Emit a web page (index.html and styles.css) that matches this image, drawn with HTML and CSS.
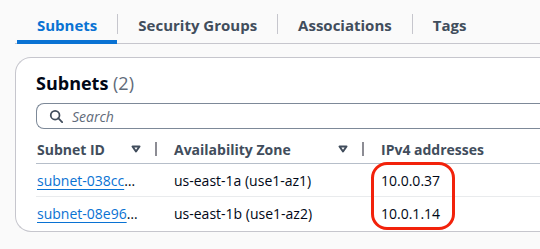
FILE: index.html
```html
<!DOCTYPE html>
<html lang="en">

<head>
    <meta charset="UTF-8">
    <meta name="viewport" content="width=device-width, initial-scale=1.0">
    <title>Subnets</title>
    <link rel="stylesheet" href="styles.css">
</head>

<body>
    <div class="tabs">
        <div class="tab active">Subnets</div>
        <span class="tab-sep"></span>
        <div class="tab">Security Groups</div>
        <span class="tab-sep"></span>
        <div class="tab">Associations</div>
        <span class="tab-sep"></span>
        <div class="tab">Tags</div>
    </div>

    <div class="card">
        <h2 class="card-title">Subnets <span class="count">(2)</span></h2>
        <div class="search">
            <svg class="search-icon" width="14" height="14" viewBox="0 0 16 16">
                <circle cx="7" cy="7" r="5" fill="none" stroke="#414d5c" stroke-width="2" />
                <path d="M10.5 10.5 L15 15" stroke="#414d5c" stroke-width="2" stroke-linecap="round" />
            </svg>
            <span class="placeholder">Search</span>
        </div>

        <div class="table">
            <div class="th">
                <span>Subnet ID</span>
                <svg class="sort" width="10" height="8" viewBox="0 0 10 8">
                    <path d="M1.5 1.5 H8.5 L5 6.5 Z" fill="none" stroke="#414d5c" stroke-width="2" stroke-linejoin="round" />
                </svg>
                <span class="col-sep"></span>
            </div>
            <div class="th">
                <span>Availability Zone</span>
                <svg class="sort" width="10" height="8" viewBox="0 0 10 8">
                    <path d="M1.5 1.5 H8.5 L5 6.5 Z" fill="none" stroke="#414d5c" stroke-width="2" stroke-linejoin="round" />
                </svg>
                <span class="col-sep"></span>
            </div>
            <div class="th">
                <span>IPv4 addresses</span>
            </div>

            <div class="td"><a href="#">subnet-038cc</a>…</div>
            <div class="td">us-east-1a (use1-az1)</div>
            <div class="td">10.0.0.37</div>

            <div class="td last"><a href="#">subnet-08e96</a>…</div>
            <div class="td last">us-east-1b (use1-az2)</div>
            <div class="td last">10.0.1.14</div>
        </div>

        <!-- highlight drawn over the ip column -->
        <div class="highlight"></div>
    </div>
</body>

</html>
```

FILE: styles.css
```css
body {
    font-family: "Open Sans", Arial, sans-serif;
    background-color: #fafafa;
    color: #000716;
    margin: 0;
    padding: 0;
    width: 540px;
    height: 249px;
    overflow: hidden;
}

.tabs {
    display: flex;
    align-items: center;
    margin-left: 15px;
    margin-top: 6px;
    padding-left: 2px;
    height: 37px;
    border-bottom: 1px solid #c6c6cd;
}

.tab {
    padding: 0 20px;
    height: 100%;
    display: flex;
    align-items: center;
    font-size: 15px;
    font-weight: 700;
    color: #414d5c;
    box-sizing: border-box;
    white-space: nowrap;
}

.tab.active {
    color: #0972d3;
    border-bottom: 4px solid #0972d3;
    padding-top: 4px;
    margin-bottom: -1px;
    height: calc(100% + 1px);
}

.tab-sep {
    width: 1px;
    height: 20px;
    background-color: #c6c6cd;
    margin-top: -2px;
}

.card {
    position: relative;
    margin: 13px 0 0 15px;
    height: 175px;
    box-sizing: border-box;
    background-color: #fff;
    border: 1px solid #c6c6cd;
    border-right: none;
    border-radius: 16px 0 0 16px;
    padding: 12px 0 0 20px;
    overflow: hidden;
}

.card-title {
    margin: 0;
    font-size: 18px;
    font-weight: 700;
    line-height: 26px;
}

.count {
    font-weight: 400;
    color: #5f6b7a;
}

.search {
    display: flex;
    align-items: center;
    margin-top: 7px;
    height: 26px;
    border: 1px solid #7d8998;
    border-right: none;
    border-radius: 8px 0 0 8px;
    padding-left: 12px;
    box-sizing: border-box;
}

.search-icon {
    margin-right: 9px;
}

.placeholder {
    font-style: italic;
    color: #5f6b7a;
    font-size: 14px;
}

.table {
    display: grid;
    grid-template-columns: 137px 207px 1fr;
    margin-top: 6px;
}

.th {
    display: flex;
    align-items: center;
    height: 28px;
    padding: 0 16px 0 1px;
    font-size: 14px;
    font-weight: 700;
    color: #414d5c;
    border-bottom: 1px solid #b6bec9;
    white-space: nowrap;
}

.th .sort {
    margin-left: auto;
    margin-right: 14px;
}

.col-sep {
    width: 2px;
    height: 14px;
    background-color: #8c8c94;
}

.td {
    display: flex;
    align-items: center;
    height: 32px;
    padding-left: 1px;
    font-size: 14px;
    border-bottom: 1px solid #e9ebed;
    white-space: nowrap;
}

.td.last {
    border-bottom: none;
}

.td a {
    color: #0972d3;
    text-decoration: underline;
    text-underline-offset: 3px;
}

.highlight {
    position: absolute;
    left: 355px;
    top: 104px;
    width: 84px;
    height: 68px;
    border: 3px solid #f2220b;
    border-radius: 16px;
    box-sizing: border-box;
}
```
